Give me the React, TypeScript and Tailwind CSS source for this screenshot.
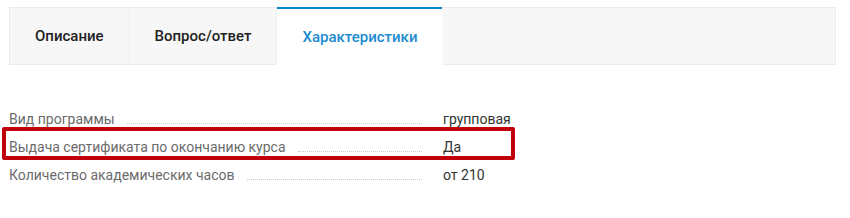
const tabs = [
  { label: "Описание", active: false },
  { label: "Вопрос/ответ", active: false },
  { label: "Характеристики", active: true },
];

const specs = [
  { name: "Вид программы", value: "групповая" },
  { name: "Выдача сертификата по окончанию курса", value: "Да", marked: true },
  { name: "Количество академических часов", value: "от 210" },
];

export default function App() {
  return (
    <div className="w-[850px] h-[218px] bg-white font-['Roboto',sans-serif] pt-[7px] pl-[9px] pr-[14px]">
      <div className="flex h-[58px] border border-[#ececec] bg-[#f7f7f7]">
        {tabs.map((tab) => (
          <div
            key={tab.label}
            className={
              tab.active
                ? "-mt-px -mb-px flex items-center px-[25px] bg-white border-t-2 border-t-[#0a86ce] text-[15px] font-medium text-[#1d8bd1]"
                : "flex items-center px-[25px] border-r border-[#ececec] text-[15px] font-medium text-[#222]"
            }
          >
            {tab.label}
          </div>
        ))}
      </div>
      <div className="mt-[38px] w-[513px] flex flex-col">
        {specs.map((row) => (
          <div key={row.name} className="relative flex items-end h-[28px] pb-[5px] text-[14px]">
            <span className="text-[#6b6b6b] whitespace-nowrap leading-none">{row.name}</span>
            <span className="flex-1 ml-3 mb-[2px] border-b border-dotted border-[#c8c8c8]" />
            <span className="w-[100px] pl-[21px] text-[#333] leading-none whitespace-nowrap">
              {row.value}
            </span>
            {row.marked && (
              <span className="absolute left-[-7px] top-[-4px] w-[513px] h-[33px] border-4 border-[#c0000a] rounded-[2px] pointer-events-none" />
            )}
          </div>
        ))}
      </div>
    </div>
  );
}
